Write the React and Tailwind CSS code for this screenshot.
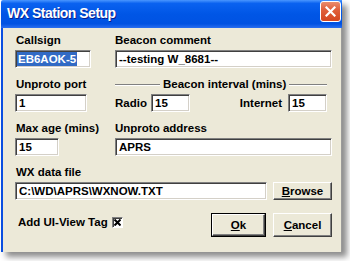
import React from 'react';

const Label = ({ children, className = '' }) => (
  <div className={`text-[11.5px] leading-[13px] font-bold text-black whitespace-nowrap ${className}`}>{children}</div>
);

const Field = ({ children, className = '', selected }) => (
  <div
    className={`h-[18px] bg-white border border-t-[#808080] border-l-[#808080] border-b-white border-r-white shadow-[inset_1px_1px_0_#404040,inset_-1px_-1px_0_#d4d0c8] p-[1px] text-[11.5px] leading-[14px] font-bold text-black whitespace-nowrap overflow-hidden ${className}`}
  >
    {selected ? (
      <span className="inline-block bg-[#316ac5] text-white px-[1px]">{children}</span>
    ) : (
      <span className="pl-[2px]">{children}</span>
    )}
  </div>
);

const Btn = ({ children, className = '', isDefault }) => (
  <div className={`${isDefault ? 'border border-black' : ''} ${className}`}>
    <div className="h-full w-full bg-[#ece9d8] border border-t-white border-l-white border-b-[#404040] border-r-[#404040] shadow-[inset_-1px_-1px_0_#808080] flex items-center justify-center text-[11.5px] leading-[13px] font-bold text-black">
      {children}
    </div>
  </div>
);

const GroupLine = ({ className = '' }) => (
  <div className={`h-[2px] border-t border-t-[#808080] border-b border-b-white ${className}`} />
);

export default function App() {
  return (
    <div className="w-[350px] h-[261px] bg-white overflow-hidden font-['Liberation_Sans',Arial,sans-serif]">
      <div className="ml-[1px] w-[341px] h-[252px] flex flex-col shadow-[5px_5px_6px_rgba(0,0,0,0.45)]">
        {/* title bar */}
        <div className="h-[28px] flex items-start justify-between bg-[linear-gradient(to_bottom,#4a96ff_0%,#0a62f0_12%,#0056e6_50%,#0052e2_85%,#2a6ef0_100%)] rounded-tl-[2px]">
          <div className="pl-[6px] pt-[5px] text-[14px] leading-[17px] font-bold text-white tracking-[-0.5px] [text-shadow:1px_1px_0_#0a1e8c]">
            WX Station Setup
          </div>
          <div className="mt-[1px] mr-[1px] w-[21px] h-[21px] rounded-[3px] border border-white bg-[linear-gradient(to_bottom,#e98d6e_0%,#e0603c_40%,#d4461f_100%)] flex items-center justify-center">
            <svg width="11" height="11" viewBox="0 0 11 11">
              <path d="M1.5 1.5 L9.5 9.5 M9.5 1.5 L1.5 9.5" stroke="white" strokeWidth="2.2" strokeLinecap="square" />
            </svg>
          </div>
        </div>

        {/* body */}
        <div className="flex-1 bg-[#ece9d8] border-l-2 border-l-[#0a4ee0] border-r border-r-[#9a9a9a] pl-[12px] pt-[6px]">
          <div className="flex">
            <div className="w-[100px]">
              <Label className="pl-[1px]">Callsign</Label>
              <Field className="w-[76px] mt-[3px]" selected>EB6AOK-5</Field>
            </div>
            <div className="w-[217px]">
              <Label>Beacon comment</Label>
              <Field className="w-[217px] mt-[3px]">--testing W_8681--</Field>
            </div>
          </div>

          <div className="flex mt-[10px]">
            <div className="w-[100px]">
              <Label className="pl-[1px]">Unproto port</Label>
              <Field className="w-[72px] mt-[3px]">1</Field>
            </div>
            <div className="w-[212px]">
              <div className="flex items-center h-[13px]">
                <GroupLine className="w-[45px]" />
                <Label className="mx-[3px]">Beacon interval (mins)</Label>
                <GroupLine className="flex-1" />
              </div>
              <div className="flex items-center mt-[3px]">
                <Label className="w-[36px]">Radio</Label>
                <Field className="w-[39px]">15</Field>
                <Label className="ml-auto">Internet</Label>
                <Field className="w-[39px] ml-[6px]">15</Field>
              </div>
            </div>
          </div>

          <div className="flex mt-[10px]">
            <div className="w-[100px]">
              <Label className="pl-[1px]">Max age (mins)</Label>
              <Field className="w-[44px] mt-[3px]">15</Field>
            </div>
            <div className="w-[217px]">
              <Label>Unproto address</Label>
              <Field className="w-[217px] mt-[3px]">APRS</Field>
            </div>
          </div>

          <div className="mt-[10px]">
            <Label className="pl-[1px]">WX data file</Label>
            <div className="flex mt-[3px]">
              <Field className="w-[252px]">C:\WD\APRS\WXNOW.TXT</Field>
              <Btn className="w-[59px] h-[18px] ml-[6px]">
                <span><u>B</u>rowse</span>
              </Btn>
            </div>
          </div>

          <div className="flex mt-[13px] w-[317px]">
            <div className="flex items-center pl-[3px] pt-[2px] h-[13px] mt-[2px]">
              <Label>Add UI-View Tag</Label>
              <div className="ml-[4px] w-[11px] h-[11px] bg-white border border-t-[#808080] border-l-[#808080] border-b-white border-r-white shadow-[inset_1px_1px_0_#404040] flex items-center justify-center">
                <svg width="7" height="7" viewBox="0 0 7 7">
                  <path d="M0.5 0.5 L6.5 6.5 M6.5 0.5 L0.5 6.5" stroke="black" strokeWidth="2" />
                </svg>
              </div>
            </div>
            <Btn isDefault className="ml-auto w-[55px] h-[24px]">
              <span><u>O</u>k</span>
            </Btn>
            <Btn className="ml-[7px] w-[59px] h-[24px]">
              <span><u>C</u>ancel</span>
            </Btn>
          </div>
        </div>
      </div>
    </div>
  );
}
